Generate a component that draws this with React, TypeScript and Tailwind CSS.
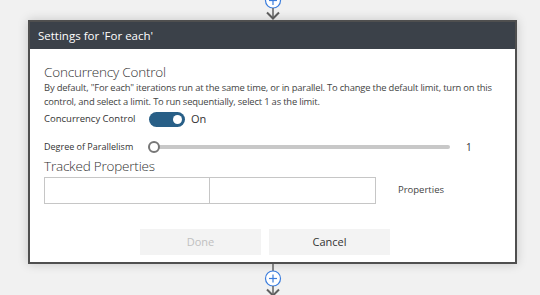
import React from 'react';

const FONT = { fontFamily: '"Open Sans", "Segoe UI", sans-serif' };

function TopConnector() {
  return (
    <svg width="20" height="20" viewBox="0 0 20 20" className="block shrink-0">
      <circle cx="10" cy="0.5" r="7.5" fill="#fff" stroke="#3b7ddd" strokeWidth="1.2" />
      <line x1="10" y1="-4" x2="10" y2="5" stroke="#3b7ddd" strokeWidth="1.2" />
      <line x1="6" y1="0.5" x2="14" y2="0.5" stroke="#3b7ddd" strokeWidth="1.2" />
      <line x1="10" y1="8" x2="10" y2="19" stroke="#606060" strokeWidth="1.5" />
      <polyline points="4,12.5 10,18.5 16,12.5" fill="none" stroke="#606060" strokeWidth="2" />
    </svg>
  );
}

function BottomConnector() {
  return (
    <svg width="20" height="32" viewBox="0 0 20 32" className="block shrink-0">
      <line x1="10" y1="0" x2="10" y2="7" stroke="#606060" strokeWidth="1.5" />
      <circle cx="10" cy="14.5" r="7.5" fill="#fff" stroke="#3b7ddd" strokeWidth="1.2" />
      <line x1="10" y1="10.5" x2="10" y2="18.5" stroke="#3b7ddd" strokeWidth="1.2" />
      <line x1="6" y1="14.5" x2="14" y2="14.5" stroke="#3b7ddd" strokeWidth="1.2" />
      <line x1="10" y1="22" x2="10" y2="32" stroke="#606060" strokeWidth="1.5" />
      <polyline points="4,25.5 10,31.5 16,25.5" fill="none" stroke="#606060" strokeWidth="2" />
    </svg>
  );
}

function Toggle() {
  return (
    <div className="flex h-[15px] w-[36px] items-center justify-end rounded-full bg-[#285f87] pr-[3px]">
      <div className="h-[9px] w-[9px] rounded-full bg-white" />
    </div>
  );
}

function Slider() {
  return (
    <div className="relative flex h-[14px] w-[302px] items-center">
      <div className="h-[4px] w-full rounded-full bg-[#c8c8c8]" />
      <div className="absolute left-0 h-[12px] w-[12px] rounded-full border-2 border-[#777] bg-white" />
    </div>
  );
}

export default function App() {
  return (
    <div
      className="flex h-[295px] w-[540px] flex-col items-center overflow-hidden bg-[#f1f1f1] pl-[5px]"
      style={FONT}
    >
      <TopConnector />
      <div className="flex h-[244px] w-[489px] shrink-0 flex-col border-2 border-[#4f4f4f] bg-white shadow-[0_0_10px_rgba(0,0,0,0.18)]">
        <div className="flex h-[27px] shrink-0 items-center bg-[#3b4149] pl-[8px] text-[11.5px] text-white">
          Settings for &apos;For each&apos;
        </div>

        <div className="flex flex-1 flex-col px-[14px] pt-[14px] text-[#333]">
          <div className="text-[13.5px] font-light leading-[18px] tracking-[-0.2px] text-[#333]">Concurrency Control</div>
          <div className="text-[9.4px] leading-[14px] tracking-[-0.18px] text-[#444]">
            By default, &quot;For each&quot; iterations run at the same time, or in parallel. To change the default limit, turn on this control, and select a limit. To run sequentially, select 1 as the limit.
          </div>

          <div className="mt-[2px] flex h-[16px] items-center text-[9.5px] text-[#333]">
            <span className="w-[105px]">Concurrency Control</span>
            <Toggle />
            <span className="ml-[6px] text-[11px]">On</span>
          </div>

          <div className="mt-[13px] flex h-[14px] items-center text-[9px] text-[#333]">
            <span className="w-[104px]">Degree of Parallelism</span>
            <Slider />
            <span className="ml-[16px] text-[10px]">1</span>
          </div>

          <div className="mt-[3px] text-[13.5px] font-light leading-[18px] tracking-[-0.2px] text-[#333]">Tracked Properties</div>

          <div className="mt-[2px] flex items-center">
            <div className="h-[27px] w-[166px] border border-[#c6c6c6]" />
            <div className="h-[27px] w-[166px] border border-l-0 border-[#c6c6c6]" />
            <span className="ml-[22px] text-[9.5px] text-[#444]">Properties</span>
          </div>

          <div className="mt-[25px] flex justify-center gap-[8px] pr-[15px]">
            <button type="button" className="h-[26px] w-[121px] bg-[#f3f3f3] text-[11px] text-[#c0c0c0]">
              Done
            </button>
            <button type="button" className="h-[26px] w-[121px] bg-[#f3f3f3] text-[11px] text-[#333]">
              Cancel
            </button>
          </div>
        </div>
      </div>
      <BottomConnector />
    </div>
  );
}
